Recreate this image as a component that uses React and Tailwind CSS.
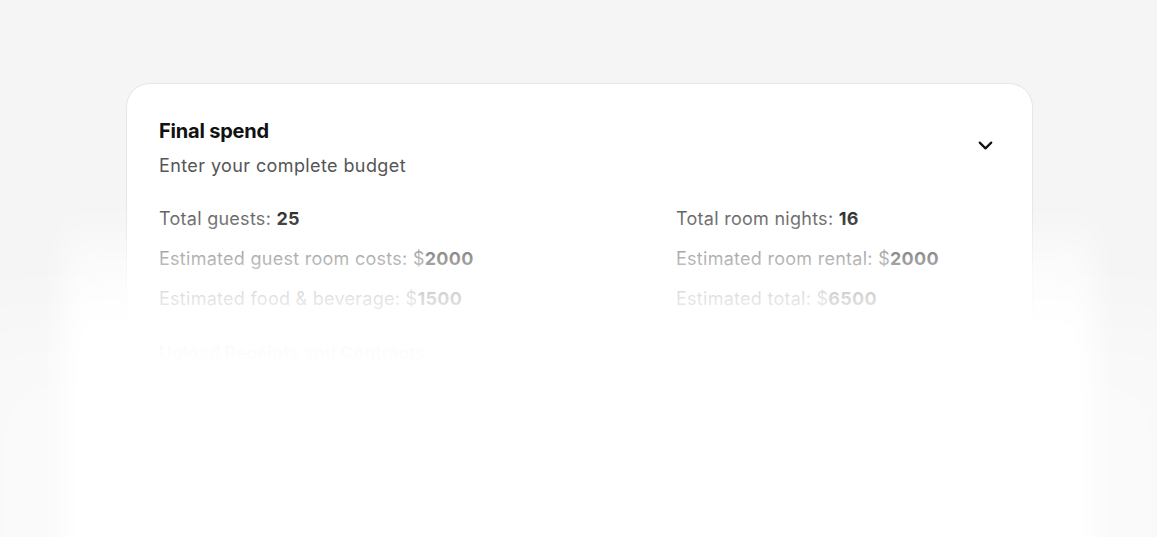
import { ChevronDown } from "lucide-react";

const left = [
  { label: "Total guests", value: "25" },
  { label: "Estimated guest room costs", value: "2000", money: true },
  { label: "Estimated food & beverage", value: "1500", money: true },
];

const right = [
  { label: "Total room nights", value: "16" },
  { label: "Estimated room rental", value: "2000", money: true },
  { label: "Estimated total", value: "6500", money: true },
];

const Stat = ({ label, value, money }) => (
  <p className="text-[18px] leading-[24px] tracking-[0.015em] text-[#555555]">
    {label}: {money && "$"}
    <span className="font-bold text-[#1a1a1a]">{value}</span>
  </p>
);

const App = () => {
  return (
    <div
      className="relative min-h-[537px] h-[537px] overflow-hidden bg-[#f5f5f5] pt-[83px] pl-[126px]"
      style={{ fontFamily: "Inter, 'Noto Sans', sans-serif" }}
    >
      <div className="w-[907px] h-[560px] rounded-[24px] border border-[#e6e6e6] bg-white px-8 pt-[34px]">
        <div className="flex justify-between items-start">
          <div className="flex flex-col gap-[10px]">
            <h2 className="text-[20px] leading-[26px] font-bold tracking-[-0.01em] text-[#111111]">Final spend</h2>
            <p className="text-[18px] leading-[24px] tracking-[0.022em] text-[#555555]">Enter your complete budget</p>
          </div>
          <ChevronDown className="mt-[16px] mr-[3px] w-[23px] h-[23px] text-[#111111]" strokeWidth={2.3} />
        </div>

        <div className="mt-[29px] grid grid-cols-[517px_1fr]">
          <div className="flex flex-col gap-[16px]">
            {left.map((s) => (
              <Stat key={s.label} {...s} />
            ))}
          </div>
          <div className="flex flex-col gap-[16px]">
            {right.map((s) => (
              <Stat key={s.label} {...s} />
            ))}
          </div>
        </div>

        <p className="mt-[28px] text-[18px] font-bold tracking-[-0.01em] text-[#1a1a1a]">Upload Receipts and Contracts</p>
      </div>

      {/* wide faint glow reaching the page edges */}
      <div className="pointer-events-none absolute left-[-60px] right-[-60px] top-[320px] bottom-[-200px] bg-white/50 blur-[50px]" />
      {/* soft white fade over the lower part */}
      <div className="pointer-events-none absolute left-[62px] right-[62px] top-[205px] bottom-[-200px] bg-[linear-gradient(to_bottom,rgba(255,255,255,0)_0px,rgba(255,255,255,0.6)_60px,rgba(255,255,255,0.85)_100px,#ffffff_150px)] blur-[14px]" />
    </div>
  );
};

export default App;
